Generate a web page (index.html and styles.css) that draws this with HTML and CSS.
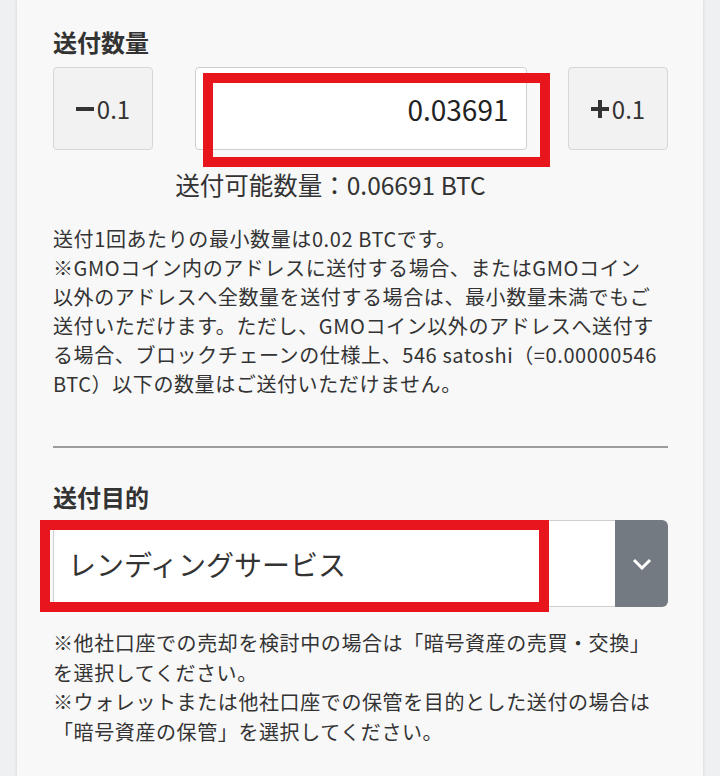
FILE: index.html
```html
<!DOCTYPE html>
<html lang="ja">
<head>
    <meta charset="UTF-8">
    <meta name="viewport" content="width=device-width, initial-scale=1.0">
    <title>送付</title>
    <link rel="stylesheet" href="styles.css">
</head>
<body>
    <div class="card">
        <h2 class="field-label">送付数量</h2>
        <div class="amount-row">
            <button class="step-btn">
                <svg class="step-icon" width="18" height="18" viewBox="0 0 18 18"><rect x="0" y="7" width="18" height="4" fill="#333"/></svg>0.1
            </button>
            <div class="amount-box">
                <input class="amount-input" type="text" value="0.03691" readonly>
                <span class="mark mark-amount"></span>
            </div>
            <button class="step-btn">
                <svg class="step-icon" width="18" height="18" viewBox="0 0 18 18"><rect x="0" y="7" width="18" height="4" fill="#333"/><rect x="7" y="0" width="4" height="18" fill="#333"/></svg>0.1
            </button>
        </div>
        <p class="available">送付可能数量：0.06691 BTC</p>
        <p class="note">送付1回あたりの最小数量は0.02 BTCです。<br>※GMOコイン内のアドレスに送付する場合、またはGMOコイン<br>以外のアドレスへ全数量を送付する場合は、最小数量未満でもご<br>送付いただけます。ただし、GMOコイン以外のアドレスへ送付す<br>る場合、ブロックチェーンの仕様上、546 satoshi（=0.00000546<br>BTC）以下の数量はご送付いただけません。</p>

        <hr class="divider">

        <h2 class="field-label">送付目的</h2>
        <div class="select-box">
            <div class="select-value">レンディングサービス</div>
            <div class="select-arrow">
                <svg width="20" height="12" viewBox="0 0 20 12"><polyline points="2,2 10,10 18,2" fill="none" stroke="#fff" stroke-width="3"/></svg>
            </div>
            <span class="mark mark-purpose"></span>
        </div>
        <p class="note note-purpose">※他社口座での売却を検討中の場合は「暗号資産の売買・交換」<br>を選択してください。<br>※ウォレットまたは他社口座での保管を目的とした送付の場合は<br>「暗号資産の保管」を選択してください。</p>
    </div>
</body>
</html>
```
FILE: styles.css
```css
body {
    margin: 0;
    padding: 0 17px;
    background: #eff0f2;
    font-family: "Noto Sans CJK JP", "Noto Sans", sans-serif;
    color: #333;
}
.card {
    box-sizing: border-box;
    background: #f8f8f8;
    box-shadow: 0 0 4px rgba(0, 0, 0, 0.12);
    padding: 26px 35px 20px 36px;
    min-height: 776px;
}
.field-label {
    margin: 0;
    font-size: 24px;
    line-height: 31px;
    font-weight: 700;
}
.amount-row {
    display: flex;
    justify-content: space-between;
    margin-top: 10px;
    height: 83px;
}
.step-btn {
    width: 100px;
    background: #f2f2f2;
    border: 1px solid #d6d6d6;
    border-radius: 4px;
    font-family: inherit;
    font-size: 24px;
    color: #333;
    display: flex;
    align-items: center;
    justify-content: center;
    gap: 3px;
    padding: 0;
}
.amount-box {
    position: relative;
    width: 332px;
}
.amount-input {
    box-sizing: border-box;
    width: 100%;
    height: 100%;
    border: 1px solid #cfcfcf;
    border-radius: 4px;
    background: #fff;
    font-family: inherit;
    font-size: 28px;
    color: #222;
    text-align: right;
    padding: 0 17px 0 0;
}
.mark {
    position: absolute;
    border: 10px solid #e8151d;
    box-sizing: border-box;
}
.mark-amount {
    left: 8px;
    top: 6px;
    width: 347px;
    height: 94px;
}
.available {
    margin: 17px 0 0;
    padding-right: 60px;
    text-align: center;
    font-size: 24.5px;
    line-height: 36px;
}
.note {
    margin: 21px 0 0;
    font-size: 20px;
    line-height: 29px;
    letter-spacing: 0.6px;
}
.divider {
    margin: 48px 0 33px;
    border: 0;
    border-top: 2px solid #9c9c9c;
}
.select-box {
    position: relative;
    display: flex;
    margin-top: 8px;
    height: 87px;
}
.select-value {
    flex: 1;
    background: #fff;
    border: 1px solid #cfcfcf;
    border-right: 0;
    font-size: 28px;
    display: flex;
    align-items: center;
    padding-left: 14px;
}
.select-arrow {
    width: 53px;
    background: #737a81;
    border-radius: 0 6px 6px 0;
    display: flex;
    align-items: center;
    justify-content: center;
}
.mark-purpose {
    left: -13px;
    top: 0;
    width: 509px;
    height: 92px;
}
.note-purpose {
    margin-top: 21px;
    line-height: 29.5px;
}
```
